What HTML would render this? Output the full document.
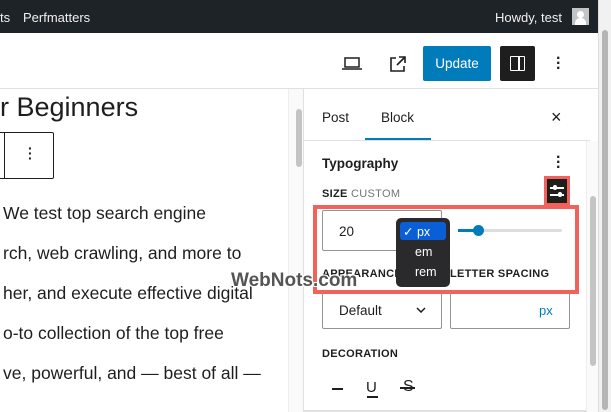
<!DOCTYPE html>
<html><head><meta charset="utf-8"><style>
*{box-sizing:border-box;margin:0;padding:0}
body{width:611px;height:412px;overflow:hidden;background:#fff;font-family:"Liberation Sans",sans-serif;color:#1e1e1e;position:relative}
.a{position:absolute}
.lbl{font-size:11px;font-weight:bold;letter-spacing:.3px;color:#1e1e1e}
</style></head><body>
<div class="a" style="left:0;top:0;width:598px;height:33px;background:#1d2327;color:#f0f0f1;font-size:13px">
<span class="a" style="left:0;top:10px">ts</span>
<span class="a" style="left:23px;top:10px">Perfmatters</span>
<span class="a" style="left:495px;top:10px">Howdy, test</span>
<div class="a" style="left:572px;top:8px;width:17px;height:17px;background:#c3c4c7"><div class="a" style="left:5px;top:3px;width:7px;height:7px;border-radius:50%;background:#fff"></div><div class="a" style="left:3px;top:10px;width:11px;height:7px;border-radius:5px 5px 0 0;background:#fff"></div></div>
</div>
<div class="a" style="left:598px;top:0;width:13px;height:412px;background:#f1f1f1;border-left:1px solid #ddd"><div class="a" style="left:3px;top:30px;width:6px;height:380px;background:#b5b5b5;border-radius:3px"></div></div>
<div class="a" style="left:0;top:88px;width:598px;height:1px;background:#e0e0e0"></div>
<svg class="a" style="left:341px;top:56px" width="22" height="16" viewBox="0 0 22 16"><rect x="4" y="2" width="14" height="9" fill="none" stroke="#1e1e1e" stroke-width="1.5"/><line x1="1" y1="13" x2="21" y2="13" stroke="#1e1e1e" stroke-width="1.5"/></svg>
<svg class="a" style="left:388px;top:54px" width="20" height="20" viewBox="0 0 20 20"><path d="M8 4H3v13h13v-5M11 3h6v6M17 3l-8 8" fill="none" stroke="#1e1e1e" stroke-width="1.6"/></svg>
<div class="a" style="left:423px;top:46px;width:68px;height:35px;background:#007cba;border-radius:2px;color:#fff;font-size:13.5px;text-align:center;line-height:35px">Update</div>
<div class="a" style="left:500px;top:46px;width:35px;height:35px;background:#1e1e1e;border-radius:2px"><div class="a" style="left:10px;top:10px;width:15px;height:15px;border:1.8px solid #fff;border-radius:1px"></div><div class="a" style="left:18px;top:10px;width:2px;height:15px;background:#fff"></div></div>
<div class="a" style="left:556px;top:56px;font-size:16px;line-height:5px;font-weight:bold;width:4px">·<br>·<br>·</div>
<div class="a" style="left:0;top:92px;font-size:27px;color:#1e1e1e">r Beginners</div>
<div class="a" style="left:-2px;top:132px;width:56px;height:47px;border:1px solid #1e1e1e;border-radius:2px"><div class="a" style="left:5px;top:0;width:1px;height:45px;background:#1e1e1e"></div></div>
<div class="a" style="left:28px;top:146px;font-size:14px;line-height:5px;font-weight:bold">·<br>·<br>·</div>
<div class="a" style="left:3px;top:193px;font-size:17.5px;line-height:40px;color:#1e1e1e;white-space:nowrap">We test top search engine<br>rch, web crawling, and more to<br>her, and execute effective digital<br>o-to collection of the top free<br>ve, powerful, and — best of all —</div>
<div class="a" style="left:288px;top:89px;width:16px;height:323px;background:#fafafa;border-left:1px solid #eee;border-right:1px solid #ddd"><div class="a" style="left:7px;top:20px;width:6px;height:58px;background:#c4c4c4;border-radius:3px"></div></div>
<div class="a" style="left:322px;top:110px;font-size:13.5px">Post</div>
<div class="a" style="left:381px;top:110px;font-size:13.5px">Block</div>
<div class="a" style="left:365px;top:138px;width:66px;height:2px;background:#007cba"></div>
<div class="a" style="left:551px;top:107px;font-size:18px">×</div>
<div class="a" style="left:304px;top:140px;width:286px;height:1px;background:#e0e0e0"></div>
<div class="a" style="left:322px;top:156px;font-size:13.5px;font-weight:bold">Typography</div>
<div class="a" style="left:556px;top:155px;font-size:16px;line-height:5px;font-weight:bold">·<br>·<br>·</div>
<div class="a lbl" style="left:322px;top:188px">SIZE <span style="color:#757575;font-weight:normal">CUSTOM</span></div>
<div class="a" style="left:544px;top:176px;width:26px;height:30px;border:3px solid #f0625a"></div>
<div class="a" style="left:547px;top:179px;width:20px;height:24px;background:#1e1e1e"><div class="a" style="left:3px;top:8px;width:14px;height:1.5px;background:#fff"></div><div class="a" style="left:3px;top:15px;width:14px;height:1.5px;background:#fff"></div><div class="a" style="left:6px;top:6px;width:4px;height:5px;background:#fff;border-radius:2px"></div><div class="a" style="left:11px;top:13px;width:4px;height:5px;background:#fff;border-radius:2px"></div></div>
<div class="a" style="left:313px;top:205px;width:266px;height:89px;border:4px solid #f0625a"></div>
<div class="a" style="left:322px;top:210px;width:120px;height:41px;border:1px solid #949494;border-radius:2px;font-size:13.5px;padding:13px 0 0 16px">20</div>
<div class="a" style="left:458px;top:229px;width:104px;height:3px;background:#ddd;border-radius:2px"></div>
<div class="a" style="left:458px;top:229px;width:22px;height:3px;background:#007cba"></div>
<div class="a" style="left:473px;top:225px;width:11px;height:11px;background:#007cba;border-radius:50%"></div>
<div class="a lbl" style="left:322px;top:268px">APPEARANCE</div>
<div class="a lbl" style="left:450px;top:268px">LETTER SPACING</div>
<div class="a" style="left:396px;top:218px;width:54px;height:69px;background:#2a2a2c;border-radius:5px;color:#fff;font-size:12.5px">
<div class="a" style="left:4px;top:4px;width:46px;height:18px;background:#0a5fd7;border-radius:3px;padding:2px 0 0 3px">✓ px</div>
<div class="a" style="left:19px;top:27px">em</div>
<div class="a" style="left:19px;top:47px">rem</div></div>
<div class="a" style="left:322px;top:294px;width:120px;height:35px;border:1px solid #949494;border-top:0;border-radius:0 0 2px 2px;font-size:13.5px;padding:9px 0 0 16px">Default</div>
<svg class="a" style="left:416px;top:307px" width="10" height="6" viewBox="0 0 10 6"><path d="M1 1l4 4 4-4" fill="none" stroke="#1e1e1e" stroke-width="1.5"/></svg>
<div class="a" style="left:450px;top:294px;width:120px;height:35px;border:1px solid #949494;border-top:0;border-radius:0 0 2px 2px;font-size:13px;color:#007cba;padding:9px 0 0 88px">px</div>
<div class="a lbl" style="left:322px;top:348px">DECORATION</div>
<div class="a" style="left:332px;top:388px;width:11px;height:1.5px;background:#1e1e1e"></div>
<div class="a" style="left:366px;top:379px;font-size:15px">U</div>
<div class="a" style="left:367px;top:396px;width:11px;height:1.5px;background:#1e1e1e"></div>
<div class="a" style="left:403px;top:378px;font-size:16px">S</div>
<div class="a" style="left:400px;top:387px;width:15px;height:1.5px;background:#1e1e1e"></div>
<div class="a" style="left:304px;top:410px;width:294px;height:2px;background:#e0e0e0"></div>
<div class="a" style="left:586px;top:141px;width:12px;height:271px;background:#fafafa;border-left:1px solid #eee"><div class="a" style="left:3px;top:55px;width:6px;height:170px;background:#c4c4c4;border-radius:3px"></div></div>
<div class="a" style="left:303px;top:89px;width:1px;height:323px;background:#e0e0e0"></div>
<div class="a" style="left:231px;top:270px;font-size:19px;font-weight:bold;color:#555;text-shadow:1px 1px 0 #fff,-1px -1px 0 #fff,1px -1px 0 #fff,-1px 1px 0 #fff">WebNots.com</div>
</body></html>
